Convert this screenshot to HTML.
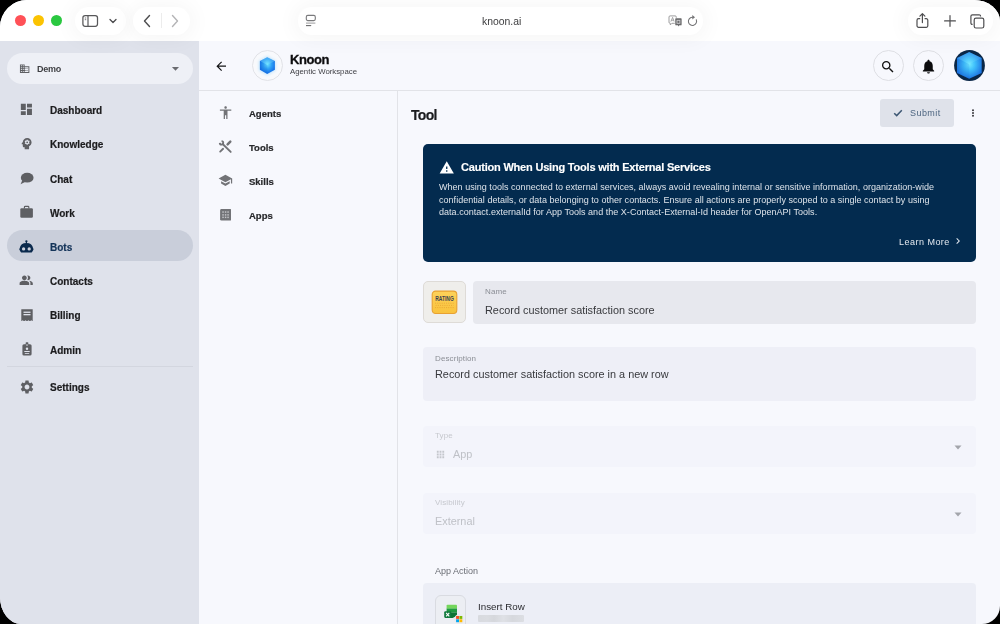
<!DOCTYPE html>
<html><head><meta charset="utf-8">
<style>
*{margin:0;padding:0;box-sizing:border-box}
html,body{width:1000px;height:624px;overflow:hidden;background:#000}
body{font-family:"Liberation Sans",sans-serif;position:relative}
.t,.nav,.sn,.lbl,.val{will-change:transform}
.nav,.sn{-webkit-text-stroke:0.2px currentColor}
#win{position:absolute;left:0;top:0;width:1000px;height:624px;overflow:hidden;background:#f7f8fd;
 border-top-left-radius:27px;border-top-right-radius:26px 21px;border-bottom-right-radius:18px;border-bottom-left-radius:21px 27px}
.a{position:absolute}
.t{position:absolute;line-height:1;white-space:nowrap}
svg{position:absolute;display:block;z-index:6}
/* toolbar */
#tb{left:0;top:0;width:1000px;height:41px;background:transparent;z-index:5}
#tbbg{left:0;top:0;width:1000px;height:41px;background:#fff}
.pill{position:absolute;background:#fff;border-radius:14px;box-shadow:0 1px 20px 5px rgba(0,0,0,.035)}
.light{position:absolute;width:11.5px;height:11.5px;border-radius:50%;top:14.6px}
/* sidebar */
#sb{left:0;top:41px;width:199px;height:583px;background:#dfe2eb}
.nav{position:absolute;left:50px;font-size:10px;font-weight:bold;color:#1c1c1e;line-height:1;white-space:nowrap}
.sn{position:absolute;left:249px;font-size:9.5px;font-weight:bold;color:#27282b;line-height:1;white-space:nowrap}
.ic{fill:#5e5f63}
.ic2{fill:#727377}
.lbl{position:absolute;font-size:8px;letter-spacing:0.1px;color:#8b8e95;line-height:1;white-space:nowrap}
.val{position:absolute;font-size:10.87px;color:#38393d;line-height:1;white-space:nowrap}
</style></head><body>
<div id="win">
 <!-- ===== Toolbar ===== -->
 <div id="tbbg" class="a"></div>
 <div id="tb" class="a">
  <div class="light" style="left:14.6px;background:#ff5157"></div>
  <div class="light" style="left:32.6px;background:#fbc302"></div>
  <div class="light" style="left:50.6px;background:#2ac840"></div>
  <div class="pill" style="left:75px;top:7px;width:51px;height:28px"></div>
  <div class="pill" style="left:133px;top:7px;width:57px;height:28px"></div>
  <div class="pill" style="left:298px;top:7px;width:405px;height:28px"></div>
  <div class="pill" style="left:908px;top:7px;width:85px;height:28px"></div>
  <div class="t" style="left:482px;top:16.6px;font-size:10.4px;color:#3d3d3f">knoon.ai</div>
 </div>

 <!-- ===== Sidebar ===== -->
 <div id="sb" class="a"></div>
 <div class="a" style="left:7px;top:53px;width:186px;height:31px;border-radius:16px;background:#eef0f6"></div>
 <div class="t" style="left:36.7px;top:65.3px;font-size:9px;font-weight:bold;color:#3e3f43;letter-spacing:-0.25px">Demo</div>
 <div class="a" style="left:7px;top:230px;width:186px;height:31px;border-radius:16px;background:#c9ceda"></div>
 <div class="nav" style="top:106.2px">Dashboard</div>
 <div class="nav" style="top:140.4px">Knowledge</div>
 <div class="nav" style="top:174.6px">Chat</div>
 <div class="nav" style="top:208.8px">Work</div>
 <div class="nav" style="top:243.0px;color:#143459">Bots</div>
 <div class="nav" style="top:277.2px">Contacts</div>
 <div class="nav" style="top:311.4px">Billing</div>
 <div class="nav" style="top:345.6px">Admin</div>
 <div class="a" style="left:7px;top:366px;width:186px;height:1px;background:#d3d6df"></div>
 <div class="nav" style="top:383.4px">Settings</div>

 <!-- ===== Header ===== -->
 <div class="a" style="left:199px;top:90px;width:801px;height:1px;background:#e2e3e8"></div>
 <div class="t" style="left:290px;top:53px;font-size:13px;font-weight:bold;color:#0d0d0f;letter-spacing:-0.4px;-webkit-text-stroke:0.3px #0d0d0f">Knoon</div>
 <div class="t" style="left:290px;top:67.8px;font-size:7.8px;color:#404146">Agentic Workspace</div>

 <!-- ===== Secondary nav ===== -->
 <div class="a" style="left:397px;top:91px;width:1px;height:533px;background:#e2e3e8"></div>
 <div class="sn" style="top:109px">Agents</div>
 <div class="sn" style="top:143px">Tools</div>
 <div class="sn" style="top:177px">Skills</div>
 <div class="sn" style="top:211px">Apps</div>

 <!-- ===== Main ===== -->
 <div class="t" style="left:410.8px;top:108px;font-size:14px;font-weight:bold;color:#1b1c1f;letter-spacing:-0.7px;-webkit-text-stroke:0.2px #1b1c1f">Tool</div>
 <div class="a" style="left:880px;top:99px;width:74px;height:28px;border-radius:3px;background:#dfe2ea"></div>
 <div class="t" style="left:909.7px;top:108.7px;font-size:9px;color:#4d6580;letter-spacing:0.45px">Submit</div>

 <div class="a" style="left:423px;top:144px;width:552.5px;height:117.5px;border-radius:5px;background:#032b4f"></div>
 <div class="t" style="left:461.2px;top:161.7px;font-size:11px;font-weight:bold;color:#fff;letter-spacing:-0.2px;-webkit-text-stroke:0.15px #fff">Caution When Using Tools with External Services</div>
 <div class="t" style="left:438.9px;top:180.9px;font-size:9px;color:#dde3ea;line-height:12.5px;letter-spacing:0.03px">When using tools connected to external services, always avoid revealing internal or sensitive information, organization-wide<br>confidential details, or data belonging to other contacts. Ensure all actions are properly scoped to a single contact by using<br>data.contact.externalId for App Tools and the X-Contact-External-Id header for OpenAPI Tools.</div>
 <div class="t" style="left:898.5px;top:237.7px;font-size:9px;color:#e3e8ef;letter-spacing:0.48px">Learn More</div>

 <!-- name row -->
 <div class="a" style="left:423px;top:281px;width:43px;height:42px;border-radius:5px;background:#efeeeb;border:1px solid #dedbd7"></div>
 <div class="a" style="left:473px;top:281px;width:503px;height:42.5px;border-radius:4px;background:#e7e8ee"></div>
 <div class="lbl" style="left:485px;top:287.8px">Name</div>
 <div class="val" style="left:485px;top:304.6px">Record customer satisfaction score</div>

 <div class="a" style="left:423px;top:347px;width:553px;height:54px;border-radius:4px;background:#eeeff7"></div>
 <div class="lbl" style="left:435.3px;top:354.7px">Description</div>
 <div class="val" style="left:435.2px;top:368.5px">Record customer satisfaction score in a new row</div>

 <div class="a" style="left:423px;top:426px;width:553px;height:41px;border-radius:4px;background:#f3f4fb"></div>
 <div class="lbl" style="left:435.3px;top:432.1px;color:#c6c8ce">Type</div>
 <div class="val" style="left:452.6px;top:449.3px;color:#bfc1c7">App</div>

 <div class="a" style="left:423px;top:492.5px;width:553px;height:41.5px;border-radius:4px;background:#f3f4fb"></div>
 <div class="lbl" style="left:435.3px;top:498.9px;color:#c6c8ce">Visibility</div>
 <div class="val" style="left:435px;top:516.1px;color:#bfc1c7">External</div>

 <div class="t" style="left:435px;top:566.8px;font-size:9px;color:#6b6e75">App Action</div>
 <div class="a" style="left:423px;top:583px;width:553px;height:60px;border-radius:4px;background:#eceef6"></div>
 <div class="a" style="left:435px;top:595.2px;width:31px;height:40px;border-radius:6px;background:#eceef3;border:1px solid #d9dbe1"></div>
 <div class="t" style="left:478.3px;top:601.7px;font-size:9.8px;color:#2a2b2f">Insert Row</div>
 <div class="a" style="left:478px;top:615px;width:46px;height:7px;background:linear-gradient(90deg,#d8dadf 0,#dadce1 20%,#d5d7dc 35%,#dfe1e6 55%,#d6d8dd 75%,#dcdee3 100%);border-radius:1px;filter:blur(0.4px)"></div>

 <!-- ===== Toolbar icons ===== -->
 <svg style="left:81px;top:13px" width="18" height="16" viewBox="0 0 18 16"><rect x="1.9" y="2.5" width="14.6" height="10.8" rx="2.2" fill="none" stroke="#58585a" stroke-width="1.25"/><line x1="7" y1="2.8" x2="7" y2="13" stroke="#58585a" stroke-width="1.2"/><line x1="3.8" y1="5" x2="5.2" y2="5" stroke="#58585a" stroke-width="0.8"/><line x1="3.8" y1="6.7" x2="5.2" y2="6.7" stroke="#58585a" stroke-width="0.8"/></svg>
 <svg style="left:108.2px;top:17px" width="10" height="8" viewBox="0 0 10 8"><path d="M2 2.5 L5 5.5 L8 2.5" fill="none" stroke="#4a4a4c" stroke-width="1.3" stroke-linecap="round" stroke-linejoin="round"/></svg>
 <svg style="left:141px;top:13px" width="12" height="16" viewBox="0 0 12 16"><path d="M8.5 2.5 L3.5 8 L8.5 13.5" fill="none" stroke="#4d4d4f" stroke-width="1.4" stroke-linecap="round" stroke-linejoin="round"/></svg>
 <div class="a" style="left:161.3px;top:13px;width:1px;height:15px;background:#ececec;z-index:6"></div>
 <svg style="left:169px;top:13px" width="12" height="16" viewBox="0 0 12 16"><path d="M3.5 2.5 L8.5 8 L3.5 13.5" fill="none" stroke="#b4b4b6" stroke-width="1.4" stroke-linecap="round" stroke-linejoin="round"/></svg>
 <svg style="left:304px;top:13px" width="14" height="15" viewBox="0 0 14 15"><rect x="2.3" y="2.4" width="9" height="5.2" rx="1.5" fill="none" stroke="#7a7a7c" stroke-width="1.1"/><line x1="2" y1="10.1" x2="11.4" y2="10.1" stroke="#9a9a9c" stroke-width="1"/><line x1="2" y1="12.6" x2="7.2" y2="12.6" stroke="#6a6a6c" stroke-width="1.1"/></svg>
 <svg style="left:667px;top:14px" width="17" height="14" viewBox="0 0 17 14"><path d="M3.1 1.9 H8.2 Q9.3 1.9 9.3 3 V8.2 Q9.3 9.3 8.2 9.3 H4.9 L3.3 10.9 V9.3 H3.1 Q2 9.3 2 8.2 V3 Q2 1.9 3.1 1.9z" fill="#fff" stroke="#8c8c8e" stroke-width="0.85"/><path d="M3.9 7.6 L5.6 3.4 L7.2 7.6 M4.5 6.2 H6.7" fill="none" stroke="#8c8c8e" stroke-width="0.75"/><path d="M9.1 4 H13.8 Q14.9 4 14.9 5.1 V10.5 Q14.9 11.6 13.8 11.6 H12.4 L11.4 12.8 L10.9 11.6 H9.1 Q8 11.6 8 10.5 V5.1 Q8 4 9.1 4z" fill="#69696b" stroke="#fff" stroke-width="0.5"/><rect x="10" y="6.3" width="2.9" height="3" fill="none" stroke="#d8d8da" stroke-width="0.8"/></svg>
 <svg style="left:686px;top:13px" width="13" height="14" viewBox="0 0 13 14"><path d="M10.30 6.76 A4.1 4.1 0 1 1 6.14 4.22 H6.8" fill="none" stroke="#737375" stroke-width="1.05" stroke-linecap="round"/><path d="M6.3 2 L9 4.2 L6.3 6.4z" fill="#737375"/></svg>
 <svg style="left:914px;top:12px" width="17" height="17" viewBox="0 0 17 17"><path d="M6.2 6.6 H4.6 a1.6 1.6 0 0 0 -1.6 1.6 v5.6 a1.6 1.6 0 0 0 1.6 1.6 h7.6 a1.6 1.6 0 0 0 1.6 -1.6 v-5.6 a1.6 1.6 0 0 0 -1.6 -1.6 H10.6" fill="none" stroke="#4e4e50" stroke-width="1.2"/><path d="M8.4 10.6 V1.8 M5.9 4.1 L8.4 1.6 L10.9 4.1" fill="none" stroke="#4e4e50" stroke-width="1.2" stroke-linecap="round" stroke-linejoin="round"/></svg>
 <svg style="left:943px;top:14px" width="14" height="14" viewBox="0 0 14 14"><path d="M7 1.5 V12.3 M1.6 6.9 H12.4" stroke="#4e4e50" stroke-width="1.2" stroke-linecap="round"/></svg>
 <svg style="left:969px;top:12.5px" width="17" height="17" viewBox="0 0 17 17"><path d="M3.6 11.4 h-.4 a1.3 1.3 0 0 1 -1.3 -1.3 V3.3 a1.5 1.5 0 0 1 1.5 -1.5 h6.8 a1.3 1.3 0 0 1 1.3 1.3 v.5" fill="none" stroke="#4e4e50" stroke-width="1.2"/><rect x="5.2" y="5.2" width="9.6" height="9.8" rx="1.8" fill="#fff" stroke="#4e4e50" stroke-width="1.2"/></svg>

 <!-- ===== Sidebar icons ===== -->
 <svg style="left:18.7px;top:62.8px" width="11.3" height="11.3" viewBox="0 0 24 24" class="ic"><path d="M12 7V3H2v18h20V7H12zM6 19H4v-2h2v2zm0-4H4v-2h2v2zm0-4H4V9h2v2zm0-4H4V5h2v2zm4 12H8v-2h2v2zm0-4H8v-2h2v2zm0-4H8V9h2v2zm0-4H8V5h2v2zm10 12h-8v-2h2v-2h-2v-2h2v-2h-2V9h8v10zm-2-8h-2v2h2v-2zm0 4h-2v2h2v-2z"/></svg>
 <svg style="left:167px;top:59.5px" width="17" height="17" viewBox="0 0 24 24"><path d="M7 10l5 5 5-5z" fill="#6a6b70"/></svg>
 <svg style="left:19.05px;top:101.95px" width="14.8" height="14.8" viewBox="0 0 24 24" class="ic"><path d="M3 13h8V3H3v10zm0 8h8v-6H3v6zm10 0h8V11h-8v10zm0-18v6h8V3h-8z"/></svg>
 <svg style="left:19px;top:136.3px" width="15.1" height="15.1" viewBox="0 0 24 24" class="ic"><path d="M13 8.57c-.79 0-1.43.64-1.43 1.43s.64 1.43 1.43 1.43 1.43-.64 1.43-1.43-.64-1.43-1.43-1.43zM13 3C9.25 3 6.2 5.94 6.02 9.64L4.1 12.2c-.25.33-.01.8.4.8H6v3c0 1.1.9 2 2 2h1v3h7v-4.68c2.36-1.12 4-3.53 4-6.32 0-3.870-3.13-7-7-7zm3 7c0 .13-.01.26-.02.39l.83.66c.08.06.1.16.05.25l-.8 1.39c-.05.09-.16.12-.24.09l-.99-.4c-.21.16-.43.29-.67.39L14 13.83c-.01.1-.1.17-.2.17h-1.6c-.1 0-.18-.07-.2-.17l-.15-1.06c-.25-.1-.47-.23-.68-.39l-.99.4c-.09.03-.2 0-.25-.09l-.8-1.39c-.05-.08-.03-.19.05-.25l.84-.66c-.01-.13-.02-.26-.02-.39s.02-.27.04-.39l-.85-.66c-.08-.06-.1-.16-.05-.26l.8-1.38c.05-.09.15-.12.24-.09l1 .4c.2-.15.43-.29.67-.39L12 6.17c.02-.1.1-.17.2-.17h1.6c.1 0 .18.07.2.17l.15 1.06c.24.1.46.23.67.39l1-.4c.09-.03.2 0 .24.09l.8 1.380c.05.09.03.2-.05.26l-.85.66c.03.12.04.25.04.39z"/></svg>
 <svg style="left:19.5px;top:171.5px" width="14.5" height="13" viewBox="0 0 14.5 13" class="ic"><ellipse cx="7.2" cy="5.7" rx="6.35" ry="4.9"/><path d="M2.4 8 L0.6 12.2 L6 9.6z"/></svg>
 <svg style="left:19px;top:204px" width="15" height="15" viewBox="0 0 15 15"><rect x="1.3" y="4.3" width="12.6" height="9.5" rx="1.2" fill="#5e5f63"/><path d="M5.4 4.6 V3.1 Q5.4 2.3 6.2 2.3 H9 Q9.8 2.3 9.8 3.1 V4.6" fill="none" stroke="#5e5f63" stroke-width="1.15"/></svg>
 <svg style="left:19.2px;top:239.6px" width="15" height="13" viewBox="0 0 15 13"><circle cx="7.4" cy="1.3" r="1.15" fill="#0b2a4d"/><rect x="6.85" y="1.6" width="1.1" height="2" fill="#0b2a4d"/><path d="M3.4 12.6 Q1.9 12.6 1.4 11.4 L0.4 9.8 Q0 9 0.7 8.3 Q1.6 3.1 7.4 3 Q13.2 3.1 14.1 8.3 Q14.8 9 14.4 9.8 L13.4 11.4 Q12.9 12.6 11.4 12.6 Z" fill="#0b2a4d"/><circle cx="4.6" cy="8.9" r="1.65" fill="#c9ceda"/><circle cx="10.2" cy="8.9" r="1.65" fill="#c9ceda"/></svg>
 <svg style="left:19.4px;top:272.8px" width="14.4" height="14.4" viewBox="0 0 24 24" class="ic"><path d="M16.67 13.13C18.04 14.06 19 15.32 19 17v3h4v-3c0-2.18-3.57-3.47-6.33-3.87zM15 12c2.21 0 4-1.79 4-4s-1.79-4-4-4c-.47 0-.91.1-1.33.24C14.5 5.27 15 6.58 15 8s-.5 2.73-1.33 3.76c.42.14.86.24 1.33.24zM9 12c2.21 0 4-1.790 4-4s-1.79-4-4-4-4 1.79-4 4 1.79 4 4 4zM9 13c-2.67 0-8 1.34-8 4v3h16v-3c0-2.66-5.33-4-8-4z"/></svg>
 <svg style="left:20.5px;top:308.6px" width="12" height="12.6" viewBox="0 0 12 12.6"><path d="M0.3 0.3 H11.7 V12.3 L10.3 11.2 L8.9 12.3 L7.5 11.2 L6 12.3 L4.5 11.2 L3.1 12.3 L1.7 11.2 L0.3 12.3z" fill="#5e5f63"/><rect x="2.5" y="2.6" width="7" height="1.3" fill="#dfe2eb"/><rect x="2.5" y="5" width="7" height="1.3" fill="#dfe2eb"/></svg>
 <svg style="left:21.8px;top:341.8px" width="10" height="14" viewBox="0 0 10 14"><rect x="0.4" y="2.2" width="9.2" height="11.4" rx="1.6" fill="#5e5f63"/><rect x="3.7" y="0.2" width="2.6" height="3.4" rx="0.6" fill="#5e5f63"/><rect x="4.35" y="2.4" width="1.3" height="1.3" fill="#dfe2eb"/><circle cx="5" cy="6.7" r="1.2" fill="#dfe2eb"/><rect x="2.3" y="9" width="5.4" height="1" fill="#dfe2eb"/><rect x="2.8" y="11" width="4.4" height="0.8" fill="#dfe2eb"/></svg>
 <svg style="left:18.6px;top:378.5px" width="16" height="16" viewBox="0 0 24 24" class="ic"><path d="M19.14 12.94c.04-.3.06-.61.06-.94 0-.32-.02-.64-.07-.94l2.03-1.58c.18-.14.23-.41.12-.61l-1.92-3.32c-.12-.22-.37-.29-.59-.22l-2.39.96c-.5-.38-1.03-.7-1.62-.94l-.36-2.54c-.04-.24-.24-.41-.48-.41h-3.84c-.24 0-.43.17-.47.41l-.36 2.54c-.59.24-1.13.57-1.62.94l-2.39-.96c-.22-.08-.47 0-.59.22L2.74 8.87c-.12.21-.08.47.12.61l2.030 1.58c-.05.3-.09.63-.09.94s.02.64.07.94l-2.03 1.58c-.18.14-.23.41-.12.61l1.92 3.32c.12.22.37.29.59.22l2.39-.96c.5.38 1.03.7 1.62.94l.36 2.54c.05.24.24.41.48.41h3.840c.24 0 .44-.17.47-.41l.36-2.54c.59-.24 1.13-.56 1.62-.94l2.39.96c.22.08.47 0 .59-.22l1.92-3.32c.12-.22.07-.47-.12-.61l-2.01-1.58zM12 15.6c-1.98 0-3.6-1.62-3.6-3.6s1.62-3.6 3.6-3.6 3.6 1.62 3.6 3.6-1.62 3.6-3.6 3.6z"/></svg>

 <!-- ===== Header icons ===== -->
 <svg style="left:213.6px;top:59.2px" width="14.4" height="14.4" viewBox="0 0 24 24"><path d="M20 11H7.83l5.59-5.59L12 4l-8 8 8 8 1.41-1.41L7.83 13H20v-2z" fill="#141416"/></svg>
 <div class="a" style="left:252px;top:50px;width:31px;height:31px;border-radius:50%;background:#f8f9fc;border:1px solid #e1e2e7"></div>
 <svg style="left:252px;top:50px" width="31" height="31" viewBox="0 0 31 31"><defs><radialGradient id="lg" cx="50%" cy="42%" r="55%"><stop offset="0" stop-color="#6fe4ff"/><stop offset=".5" stop-color="#2fa2f7"/><stop offset="1" stop-color="#1670e6"/></radialGradient><filter id="gl" x="-50%" y="-50%" width="200%" height="200%"><feGaussianBlur stdDeviation="1.6"/></filter></defs><path d="M15.2 6.2 L23.5 11 V20.2 L15.2 24.9 L7 20.2 V11z" fill="#8fd4ff" opacity=".55" filter="url(#gl)"/><path d="M15.2 7.2 L22.9 11 V19.7 L15.2 23.9 L7.9 19.7 V11z" fill="url(#lg)"/><path d="M15.2 7.2 L22.9 11 L15.2 15 L7.9 11z" fill="#8fe8ff" opacity=".28"/><path d="M7.9 11 L15.2 15 V23.9 L7.9 19.7z" fill="#0a4fc0" opacity=".12"/></svg>

 <div class="a" style="left:873px;top:50px;width:31px;height:31px;border-radius:50%;border:1px solid #dedfe4"></div>
 <svg style="left:880.3px;top:58.9px" width="15.8" height="15.8" viewBox="0 0 24 24"><path d="M15.5 14h-.79l-.28-.27C15.41 12.59 16 11.11 16 9.5 16 5.91 13.09 3 9.5 3S3 5.91 3 9.5 5.91 16 9.5 16c1.61 0 3.09-.59 4.23-1.57l.27.28v.79l5 4.99L20.49 19l-4.99-5zm-6 0C7.01 14 5 11.990 5 9.5S7.01 5 9.5 5 14 7.01 14 9.5 11.99 14 9.5 14z" fill="#111"/></svg>
 <div class="a" style="left:913.3px;top:50px;width:31px;height:31px;border-radius:50%;border:1px solid #dedfe4"></div>
 <svg style="left:919.9px;top:57.7px" width="17" height="17" viewBox="0 0 24 24"><path d="M12 22c1.1 0 2-.9 2-2h-4c0 1.1.89 2 2 2zm6-6v-5c0-3.07-1.64-5.64-4.5-6.32V4c0-.83-.67-1.5-1.5-1.5s-1.5.67-1.5 1.5v.68C7.63 5.36 6 7.92 6 11v5l-2 2v1h16v-1l-2-2z" fill="#0c0c0e"/></svg>
 <svg style="left:954px;top:50px" width="31" height="31" viewBox="0 0 31 31"><defs><radialGradient id="ag" cx="50%" cy="46%" r="58%"><stop offset="0" stop-color="#72e8ff"/><stop offset=".38" stop-color="#40c0fb"/><stop offset="1" stop-color="#1a6ee0"/></radialGradient></defs><circle cx="15.5" cy="15.5" r="15.4" fill="#0a2747"/><path d="M15.2 2.1 L27.7 7.9 V22.9 L15.2 28.7 L3 22.9 V7.9z" fill="url(#ag)"/><path d="M15.2 2.1 L27.7 7.9 L15.2 14.2 L3 7.9z" fill="#9ff0ff" opacity=".15"/><path d="M3 7.9 L15.2 14.2 V28.7 L3 22.9z" fill="#0a4fc0" opacity=".1"/></svg>

 <!-- ===== Secondary nav icons ===== -->
 <svg style="left:217.5px;top:105.2px" width="15.2" height="15.2" viewBox="0 0 24 24" class="ic2"><path d="M12 2c1.1 0 2 .9 2 2s-.9 2-2 2-2-.9-2-2 .9-2 2-2zm9 7h-6v13h-2v-6h-2v6H9V9H3V7h18v2z"/></svg>
 <svg style="left:216px;top:138px" width="18" height="18" viewBox="0 0 18 18"><path d="M5.56 3.05 A1.75 1.75 0 1 1 3.75 4.86" fill="none" stroke="#727377" stroke-width="1.8"/><path d="M6.9 6.2 L14.7 13.9" stroke="#727377" stroke-width="1.9" stroke-linecap="round"/><path d="M11.6 6.4 L14.3 3.7" stroke="#727377" stroke-width="2.5" stroke-linecap="round"/><path d="M4.2 13.6 L7.1 10.8" stroke="#727377" stroke-width="1.9" stroke-linecap="round"/></svg>
 <svg style="left:218.1px;top:173px" width="14.8" height="14.8" viewBox="0 0 24 24" class="ic2"><path d="M5 13.18v4L12 21l7-3.82v-4L12 17l-7-3.820zM12 3L1 9l11 6 9-4.91V17h2V9L12 3z"/></svg>
 <svg style="left:219.6px;top:209.2px" width="11.8" height="11.8" viewBox="0 0 12 12"><rect x="0.1" y="0.1" width="11.6" height="11.6" rx="1.4" fill="#727377"/><rect x="2.35" y="2.35" width="1.5" height="1.5" fill="#c3c4c8"/><rect x="2.35" y="5.25" width="1.5" height="1.5" fill="#c3c4c8"/><rect x="2.35" y="7.75" width="1.5" height="1.5" fill="#c3c4c8"/><rect x="4.95" y="2.35" width="1.5" height="1.5" fill="#c3c4c8"/><rect x="4.95" y="5.25" width="1.5" height="1.5" fill="#c3c4c8"/><rect x="4.95" y="7.75" width="1.5" height="1.5" fill="#c3c4c8"/><rect x="7.45" y="2.35" width="1.5" height="1.5" fill="#c3c4c8"/><rect x="7.45" y="5.25" width="1.5" height="1.5" fill="#c3c4c8"/><rect x="7.45" y="7.75" width="1.5" height="1.5" fill="#c3c4c8"/></svg>

 <!-- ===== Main icons ===== -->
 <svg style="left:893px;top:109px" width="10" height="8" viewBox="0 0 10 8"><path d="M1.2 4.2 L3.7 6.6 L8.8 1.3" fill="none" stroke="#3d5773" stroke-width="1.5"/></svg>
 <svg style="left:969.5px;top:107.5px" width="6" height="10" viewBox="0 0 6 10"><circle cx="3" cy="2.3" r="0.95" fill="#2a2b2e"/><circle cx="3" cy="5.05" r="0.95" fill="#2a2b2e"/><circle cx="3" cy="7.8" r="0.95" fill="#2a2b2e"/></svg>
 <svg style="left:439.15px;top:159.9px" width="15.5" height="15.5" viewBox="0 0 24 24"><path d="M1 21h22L12 2 1 21z" fill="#fff"/><path d="M13 18h-2v-2h2v2zm0-4h-2v-4h2v4z" fill="#032b4f"/></svg>
 <svg style="left:952.4px;top:235px" width="12" height="12" viewBox="0 0 24 24"><path d="M10 6L8.59 7.41 13.17 12l-4.58 4.59L10 18l6-6z" fill="#e3e8ef"/></svg>

 <svg style="left:431px;top:290.3px" width="27" height="24.5" viewBox="0 0 27 24.5"><defs><linearGradient id="rg" x1="0" y1="0" x2="0" y2="1"><stop offset="0" stop-color="#fdd25a"/><stop offset="1" stop-color="#f9c23c"/></linearGradient></defs><rect x="1.2" y="1.1" width="24.6" height="22.4" rx="3.4" fill="url(#rg)" stroke="#e8a132" stroke-width="1.1"/><text x="13.5" y="10.8" font-family="Liberation Sans" font-weight="bold" font-size="6.6" fill="#3d4252" text-anchor="middle" textLength="18.6" lengthAdjust="spacingAndGlyphs">RATING</text><path d="M4 13.2 h19 M4.6 15.4 h18 M4 17.6 h19" stroke="#e49a2c" stroke-width=".8" stroke-dasharray="1.1 1.1" opacity=".8"/></svg>

 <svg style="left:434.96px;top:448.76px" width="11" height="11" viewBox="0 0 24 24"><path d="M4 8h4V4H4v4zm6 12h4v-4h-4v4zm-6 0h4v-4H4v4zm0-6h4v-4H4v4zm6 0h4v-4h-4v4zm6-10v4h4V4h-4zm-6 4h4V4h-4v4zm6 6h4v-4h-4v4zm0 6h4v-4h-4v4z" fill="#c4c6cc"/></svg>
 <svg style="left:953.5px;top:445px" width="8" height="5" viewBox="0 0 8 5"><path d="M0.5 0.5 L7.5 0.5 L4 4.5z" fill="#a3a5ab"/></svg>
 <svg style="left:953.5px;top:512px" width="8" height="5" viewBox="0 0 8 5"><path d="M0.5 0.5 L7.5 0.5 L4 4.5z" fill="#a3a5ab"/></svg>

 <svg style="left:441px;top:601px" width="24" height="23" viewBox="0 0 24 23"><path d="M5.6 4.6 Q5.6 3.7 6.5 3.7 H15.1 Q16 3.7 16 4.6 V7.8 H5.6z" fill="#74d65c"/><rect x="5.6" y="7.6" width="10.4" height="4" fill="#1f9a40"/><path d="M5.6 11.5 H16 V13.6 Q16 14.6 15 15.2 L11.6 17 H5.6z" fill="#0e7434"/><rect x="3.2" y="10.2" width="7" height="6.7" rx="1.1" fill="#127a3e"/><path d="M5.1 11.9 L8.3 15.3 M8.3 11.9 L5.1 15.3" stroke="#fff" stroke-width="1.1"/><circle cx="18.2" cy="18.2" r="5" fill="#e8eaef"/><rect x="15.1" y="15" width="2.9" height="2.9" fill="#f25022"/><rect x="18.4" y="15" width="2.9" height="2.9" fill="#7fba00"/><rect x="15.1" y="18.3" width="2.9" height="2.9" fill="#00a4ef"/><rect x="18.4" y="18.3" width="2.9" height="2.9" fill="#ffb900"/></svg>
</div>
</body></html>
